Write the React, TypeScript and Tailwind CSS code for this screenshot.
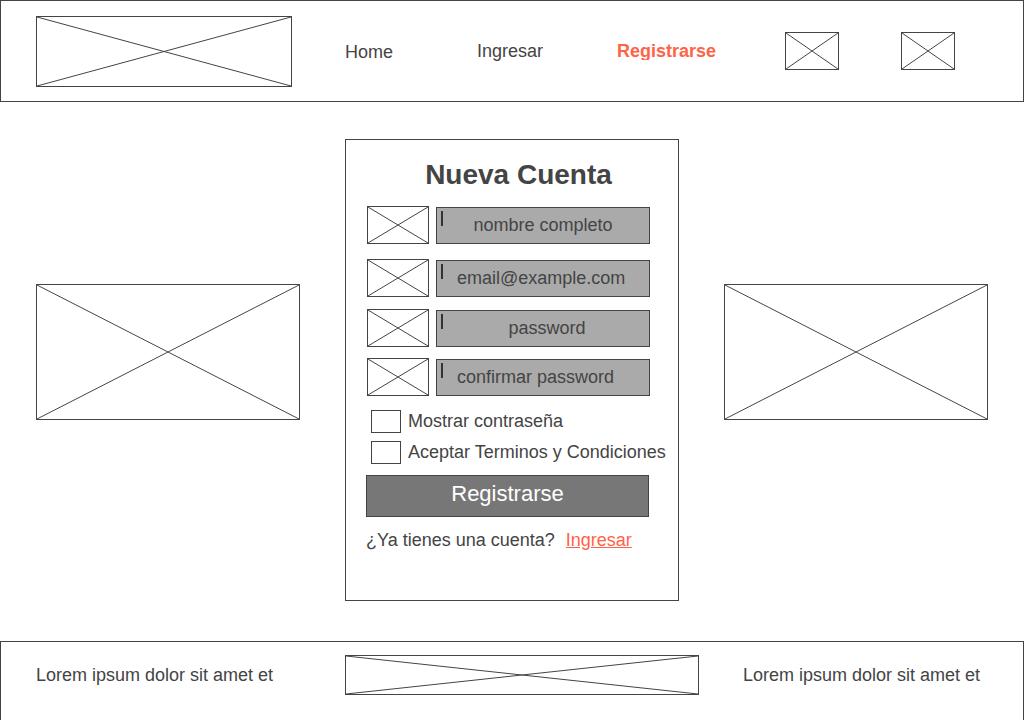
import { useState } from "react";

function ImageBox({ className, label }: { className: string; label: string }) {
  return (
    <div role="img" aria-label={label} className={`border border-[#444] bg-white ${className}`}>
      <svg className="block h-full w-full" stroke="#444" strokeWidth="1" aria-hidden="true">
        <line x1="0" y1="0" x2="100%" y2="100%" />
        <line x1="0" y1="100%" x2="100%" y2="0" />
      </svg>
    </div>
  );
}

type Field = {
  id: string;
  placeholder: string;
  type: "text" | "email" | "password";
  row: string;
  align: string;
};

const fields: Field[] = [
  { id: "nombre", placeholder: "nombre completo", type: "text", row: "mb-[15px]", align: "px-5 text-center" },
  { id: "email", placeholder: "email@example.com", type: "email", row: "mb-3", align: "pl-5" },
  { id: "password", placeholder: "password", type: "password", row: "mb-[11px]", align: "pl-7 pr-5 text-center" },
  { id: "confirmar", placeholder: "confirmar password", type: "password", row: "mb-[14px]", align: "pl-5" },
];

function FieldRow({ field, visible }: { field: Field; visible: boolean }) {
  const [value, setValue] = useState("");
  const type = field.type === "password" && visible ? "text" : field.type;
  return (
    <div className={`flex items-end gap-[7px] ${field.row}`}>
      <label htmlFor={field.id}>
        <ImageBox label={field.placeholder} className="h-[38px] w-[62px]" />
      </label>
      <div className="relative w-[214px]">
        <input
          id={field.id}
          type={type}
          value={value}
          onChange={(e) => setValue(e.target.value)}
          placeholder={field.placeholder}
          className={`block h-[37px] w-full border border-[#444] bg-[#aaa] text-lg text-[#444] outline-none placeholder:text-[#444] placeholder:opacity-100 ${field.align}`}
        />
        {value === "" && <span className="pointer-events-none absolute left-[5px] top-1 h-[15px] w-0.5 bg-[#333]" />}
      </div>
    </div>
  );
}

const box = "h-[23px] w-[30px] shrink-0 appearance-none border border-[#444] bg-white checked:bg-[#777]";

export default function App() {
  const [visible, setVisible] = useState(false);
  const [accepted, setAccepted] = useState(false);

  return (
    <div className="flex min-h-screen flex-col bg-white font-['Liberation_Sans',Arial,sans-serif] text-lg text-[#444]">
      <header className="border border-[#444] pb-[14px] pl-[35px] pt-[15px]">
        <nav className="grid grid-cols-[309fr_132fr_140fr_168fr_116fr_122fr] items-center leading-[18px]">
          <ImageBox label="Logo" className="h-[71px] w-[256px]" />
          <a href="#home" className="justify-self-start">Home</a>
          <a href="#ingresar" className="mb-px justify-self-start">Ingresar</a>
          <a href="#registrarse" aria-current="page" className="mb-px justify-self-start overflow-hidden font-bold text-[#ff6347]">
            Registrarse
          </a>
          <ImageBox label="Carrito" className="mb-px h-[38px] w-[54px]" />
          <ImageBox label="Perfil" className="mb-px h-[38px] w-[54px]" />
        </nav>
      </header>

      <main className="flex items-center gap-[45px] px-9 pb-10 pt-[37px]">
        <ImageBox label="Imagen izquierda" className="mb-9 h-[136px] flex-1" />
        <form
          onSubmit={(e) => e.preventDefault()}
          className="w-[334px] border border-[#444] pb-[49px] pl-5 pr-[7px] pt-[19px]"
        >
          <h1 className="mb-[15px] text-center text-[28px] font-bold leading-8">Nueva Cuenta</h1>
          <div className="pl-px">
            {fields.map((field) => (
              <FieldRow key={field.id} field={field} visible={visible} />
            ))}
          </div>
          <div className="flex flex-col gap-2 pl-[5px] leading-[23px]">
            <label className="flex items-center gap-[7px] whitespace-nowrap">
              <input type="checkbox" checked={visible} onChange={(e) => setVisible(e.target.checked)} className={box} />
              Mostrar contraseña
            </label>
            <label className="flex items-center gap-[7px] whitespace-nowrap">
              <input type="checkbox" checked={accepted} onChange={(e) => setAccepted(e.target.checked)} className={box} />
              Aceptar Terminos y Condiciones
            </label>
          </div>
          <button
            type="submit"
            className="mt-[11px] block h-[42px] w-[283px] border border-[#444] bg-[#777] pb-1 text-[22px] leading-6 text-white"
          >
            Registrarse
          </button>
          <p className="mt-3 flex gap-[11px] whitespace-nowrap leading-[22px]">
            ¿Ya tienes una cuenta?
            <a href="#ingresar" className="text-[#ff6347] underline">Ingresar</a>
          </p>
        </form>
        <ImageBox label="Imagen derecha" className="mb-9 h-[136px] flex-1" />
      </main>

      <footer className="flex-1 border-x border-t border-[#444] pl-[35px] pt-[13px]">
        <div className="grid grid-cols-[309fr_398fr_280fr] items-center">
          <p>Lorem ipsum dolor sit amet et</p>
          <ImageBox label="Banner" className="mr-11 h-10" />
          <p>Lorem ipsum dolor sit amet et</p>
        </div>
      </footer>
    </div>
  );
}
